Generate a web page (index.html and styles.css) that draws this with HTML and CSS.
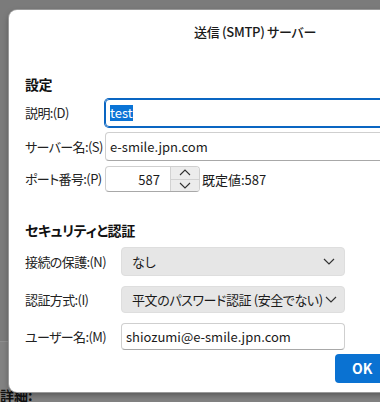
FILE: index.html
```html
<!DOCTYPE html>
<html>
<head>
	<meta charset="utf-8">
	<title>送信 (SMTP) サーバー</title>
	<link rel="stylesheet" href="styles.css">
</head>
<body>
<div class="desk">
	<div class="under">
		<div class="under-text">詳細:</div>
	</div>

	<div class="dialog">
		<div class="dlg-title">送信 (SMTP) サーバー</div>
		<div class="dlg-body">
			<div class="sect first">設定</div>
			<div class="grid server">
				<div class="lbl">説明:(D)</div>
				<div class="field focused"><span class="picked">test</span></div>

				<div class="lbl">サーバー名:(S)</div>
				<div class="field">e-smile.jpn.com</div>

				<div class="lbl">ポート番号:(P)</div>
				<div class="port-row">
					<div class="field port">
						<span class="port-val">587</span>
						<div class="spin">
							<div class="spin-btn">
								<svg width="12" height="7" viewBox="0 0 12 7"><path d="M1 6 L6 1 L11 6" fill="none" stroke="#333" stroke-width="1.1"/></svg>
							</div>
							<div class="spin-btn">
								<svg width="12" height="7" viewBox="0 0 12 7"><path d="M1 1 L6 6 L11 1" fill="none" stroke="#333" stroke-width="1.1"/></svg>
							</div>
						</div>
					</div>
					<span class="hint">既定値:587</span>
				</div>
			</div>

			<div class="sect second">セキュリティと認証</div>
			<div class="grid security">
				<div class="lbl">接続の保護:(N)</div>
				<div class="select tall">
					<span>なし</span>
					<svg width="12" height="7" viewBox="0 0 12 7"><path d="M1 1 L6 6 L11 1" fill="none" stroke="#333" stroke-width="1.2"/></svg>
				</div>

				<div class="lbl">認証方式:(I)</div>
				<div class="select">
					<span class="tight">平文のパスワード認証 (安全でない)</span>
					<svg width="12" height="7" viewBox="0 0 12 7"><path d="M1 1 L6 6 L11 1" fill="none" stroke="#333" stroke-width="1.2"/></svg>
				</div>

				<div class="lbl">ユーザー名:(M)</div>
				<div class="field user">shiozumi@e-smile.jpn.com</div>
			</div>

			<div class="buttons">
				<div class="ok">OK</div>
			</div>
		</div>
	</div>
</div>
</body>
</html>
```

FILE: styles.css
```css
html, body{
	margin: 0;
	padding: 0;
}
body{
	background: #7b7b7b;
	font-family: "Noto Sans CJK JP", "Noto Sans", sans-serif;
	font-feature-settings: "palt";
	color: #1f1f1f;
}
.desk{
	width: 380px;
	height: 402px;
	position: relative;
	overflow: hidden;
}
.under{
	margin-top: 341px;
	height: 61px;
	border-top: 1px solid #8f8f8f;
	background: #828282;
	display: flex;
	align-items: flex-end;
}
.under-text{
	font-size: 14px;
	line-height: 14px;
	font-weight: bold;
	color: #111;
	margin-left: 0;
	margin-bottom: 1px;
}
/* dialog window */
.dialog{
	position: absolute;
	left: 9px;
	top: 10px;
	width: 492px;
	height: 382px;
	background: #fff;
	border-radius: 8px;
	box-shadow: 0 0 0 1px #9a9a9a, 0 3px 6px rgba(0,0,0,0.35);
}
.dlg-title{
	height: 44px;
	line-height: 44px;
	text-align: center;
	font-size: 13px;
	letter-spacing: -0.3px;
	font-weight: 500;
	color: #1a1a1a;
}
.dlg-body{
	padding: 0 16px;
}
.sect{
	font-size: 14px;
	line-height: 20px;
	font-weight: bold;
	letter-spacing: -0.4px;
	color: #111;
}
.sect.first{
	margin-top: 20px;
	margin-bottom: 5px;
}
.sect.second{
	margin-top: 28px;
	margin-bottom: 7px;
}
.grid{
	display: grid;
	align-items: center;
	font-size: 13px;
}
.grid.server{
	grid-template-columns: 80px 1fr;
	row-gap: 5px;
}
.grid.security{
	grid-template-columns: 96px 224px;
	row-gap: 10px;
}
.lbl{
	color: #222;
	white-space: nowrap;
	line-height: 20px;
	letter-spacing: -0.6px;
}
.field{
	box-sizing: border-box;
	height: 29px;
	border: 1px solid #cfcfcf;
	border-bottom-color: #a8a8a8;
	border-radius: 4px;
	padding: 0 4px;
	display: flex;
	align-items: center;
	color: #1a1a1a;
	white-space: nowrap;
}
.field.focused{
	height: 28px;
	border: 1px solid #0a66c2;
	box-shadow: 0 0 0 1px #0a66c2;
}
.picked{
	background: #0a74d6;
	color: #fff;
	line-height: 16px;
}
.port-row{
	display: flex;
	align-items: center;
	gap: 2px;
}
.field.port{
	width: 95px;
	height: 26px;
	padding: 0;
	overflow: hidden;
}
.port-val{
	flex: 1;
	text-align: right;
	padding-right: 10px;
}
.spin{
	width: 28px;
	align-self: stretch;
	display: flex;
	flex-direction: column;
	background: #ececec;
	border-left: 1px solid #d2d2d2;
}
.spin-btn{
	flex: 1;
	display: flex;
	align-items: center;
	justify-content: center;
}
.spin-btn + .spin-btn{
	border-top: 1px solid #d2d2d2;
}
.hint{
	color: #1a1a1a;
}
.select{
	box-sizing: border-box;
	height: 27px;
	background: #e6e6e6;
	border: 1px solid #dedede;
	border-radius: 4px;
	display: flex;
	align-items: center;
	justify-content: space-between;
	padding: 0 7px 0 10px;
	white-space: nowrap;
	color: #1a1a1a;
}
.select .tight{
	letter-spacing: -0.4px;
}
.select.tall{
	height: 29px;
	padding-right: 9px;
}
.field.user{
	height: 27px;
}
.buttons{
	display: flex;
	justify-content: flex-end;
	margin-top: 4px;
}
.ok{
	width: 70px;
	height: 29px;
	flex: none;
	background: #0a72d2;
	border-radius: 4px;
	color: #fff;
	font-size: 14px;
	font-weight: bold;
	line-height: 29px;
	padding-left: 17px;
	box-sizing: border-box;
	margin-right: 80px;
}
```
